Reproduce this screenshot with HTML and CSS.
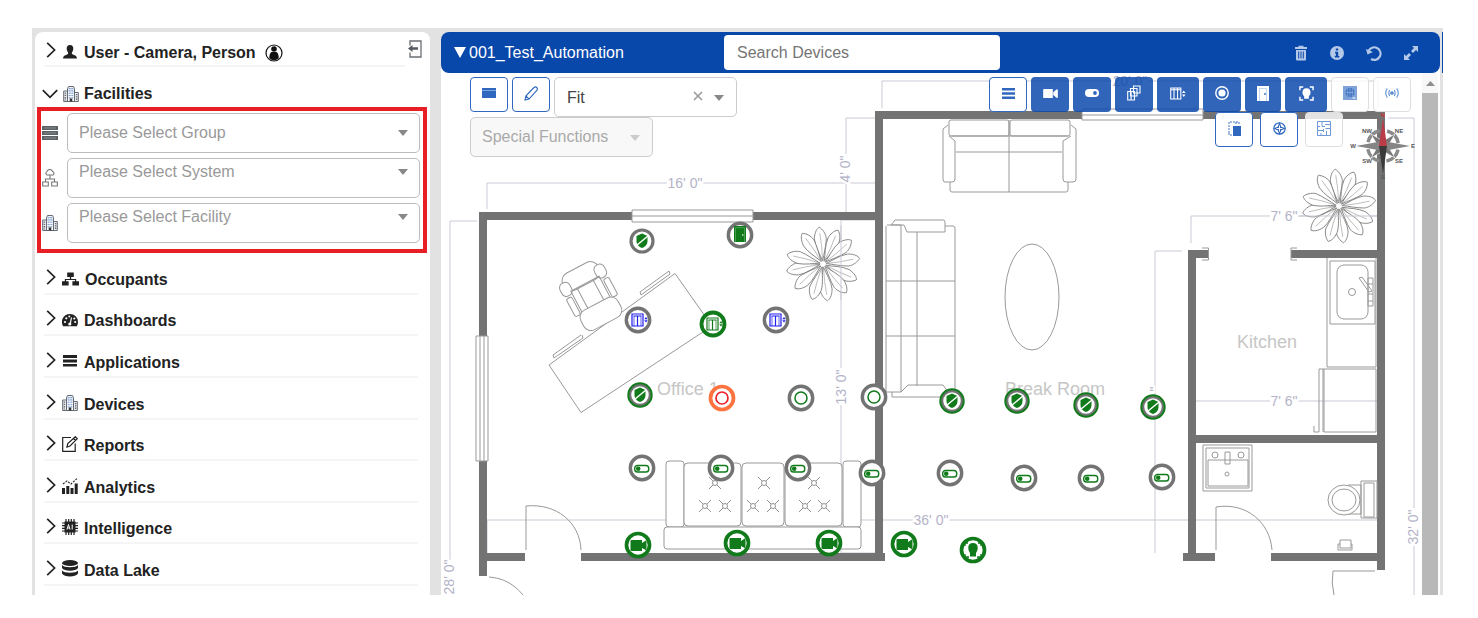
FILE: index.html
```
<!DOCTYPE html>
<html lang="en">
<head>
<meta charset="utf-8">
<title>Facility Devices</title>
<link rel="stylesheet" href="styles.css">
</head>
<body>
<svg class="sprite" aria-hidden="true">
  <symbol id="chev" viewBox="0 0 10 18"><path d="M1.2 1.8 8.6 9 1.2 16.2" fill="none" stroke="currentColor" stroke-width="1.7"/></symbol>
  <symbol id="chev-down" viewBox="0 0 16 10"><path d="M.8 1.2 8 8.4 15.2 1.2" fill="none" stroke="currentColor" stroke-width="1.7"/></symbol>
  <symbol id="building" viewBox="0 0 16 16"><path d="M4.5 15.5V2.5l1-2h5l1 2v13M4.5 5H.7v10.5h14.6V6.5h-3.8" fill="#eef1f6" stroke="#555b66" stroke-width=".9"/><path d="M6.2 2v11M8 2v11M9.8 2v11" stroke="#5f86c4" stroke-width="1" stroke-dasharray="1.3 1"/><path d="M2.4 6.5v8M13.6 8v6.500" stroke="#666" stroke-width="1.5" stroke-dasharray="1.300 1"/><path d="M6.700 12.500h2.600v3H6.700z" fill="#333"/></symbol>
  <symbol id="org" viewBox="0 0 18 14"><path d="M5.500 0h7v5h-7zM0 9.500h7V14H0zM11 9.500h7V14h-7zM8.300 5h1.400v2H15v3h-1.300V8H4.300v2H3V7h5.300z" fill="currentColor"/></symbol>
  <symbol id="cam" viewBox="0 0 16 12"><path d="M1 1h9.500v10H1a1 1 0 0 1-1-1V2a1 1 0 0 1 1-1zM11 4.500 14.500 1.500H16v9h-1.500L11 7.500z" fill="currentColor"/></symbol>
  <symbol id="lift" viewBox="0 0 18 14"><path d="M.800.800h11.400v12.400H.800zM4.500 1v12M8.500 1v12M1 2.800h11" fill="none" stroke="currentColor" stroke-width="1.200"/><path d="m15.500 3.500 2 3h-4zM13.500 8h4l-2 3z" fill="currentColor"/></symbol>
  <symbol id="face" viewBox="0 0 16 16"><path d="M8 2.500c3.200 0 4.300 2.200 4.300 4.500 0 1.800-.8 3-1.800 4v2.500h-5V11c-1-1-1.800-2.200-1.800-4C3.700 4.700 4.800 2.500 8 2.500z" fill="currentColor"/><path d="M1 4.500V1h3.500M11.500 1H15v3.500M15 11.500V15h-3.500M4.500 15H1v-3.500" fill="none" stroke="currentColor" stroke-width="1.500"/></symbol>

  <symbol id="pin-shield-grey" viewBox="-14 -14 28 28"><circle r="11" fill="#fff" stroke="#737373" stroke-width="3.200"/><use href="#shield"/></symbol>
  <symbol id="pin-shield" viewBox="-14 -14 28 28"><circle r="10" fill="#fff" stroke="#737373" stroke-width="2.500"/><circle r="11.700" fill="none" stroke="#117a1b" stroke-width="2"/><use href="#shield"/></symbol>
  <g id="shield"><path d="M0-7.500 5.500-5V0C5.500 3.500 3 6 0 7-3 6-5.500 3.500-5.500 0v-5z" fill="#117a1b"/><path d="M-5.500 4.500 6-5" stroke="#fff" stroke-width="1.500"/></g>
  <symbol id="pin-door" viewBox="-14 -14 28 28"><circle r="11.700" fill="#fff" stroke="#737373" stroke-width="3.400"/><path d="M-6-9H6V7h-12z" fill="#117a1b"/><path d="M-4.500 7V-7.300h9V7" fill="none" stroke="#5fae66" stroke-width=".7"/><circle cx="2.800" cy="0" r=".8" fill="#fff"/></symbol>
  <symbol id="pin-lift" viewBox="-14 -14 28 28"><circle r="11.700" fill="#fff" stroke="#737373" stroke-width="3.400"/><svg x="-7" y="-7" width="18" height="14" color="#1f1fee"><use href="#lift-pin"/></svg></symbol>
  <symbol id="pin-lift-on" viewBox="-14 -14 28 28"><circle r="11.500" fill="#fff" stroke="#117a1b" stroke-width="3.800"/><svg x="-7" y="-7" width="18" height="14" color="#117a1b"><use href="#lift-pin"/></svg></symbol>
  <g id="lift-pin"><path d="M1 1h11v12H1zM2.500 3h8M6.500 3v10" fill="none" stroke="currentColor" stroke-width="1.200"/><path d="M3 3v10M10 3v10" stroke="currentColor" stroke-width=".7"/><path d="m15 4 1.700 2.300h-3.400zM13.300 7.300h3.400L15 9.600z" fill="currentColor"/></g>
  <symbol id="pin-alarm" viewBox="-14 -14 28 28"><circle r="11.500" fill="#fff" stroke="#ff7340" stroke-width="3.700"/><circle r="6" fill="none" stroke="#f0202c" stroke-width="1.700"/></symbol>
  <symbol id="pin-ring" viewBox="-14 -14 28 28"><circle r="11.700" fill="#fff" stroke="#737373" stroke-width="3.400"/><circle r="6" fill="none" stroke="#117a1b" stroke-width="1.500"/></symbol>
  <symbol id="pin-toggle" viewBox="-14 -14 28 28"><circle r="11.700" fill="#fff" stroke="#737373" stroke-width="3.400"/><rect x="-7.300" y="-2.500" width="14" height="6.500" rx="2.800" fill="#fff" stroke="#117a1b" stroke-width="1.400"/><circle cx="-3.800" cy=".8" r="2.300" fill="#117a1b"/></symbol>
  <symbol id="pin-cam" viewBox="-14 -14 28 28"><circle r="11.500" fill="#fff" stroke="#117a1b" stroke-width="3.700"/><path d="M-6.500-5H4v3l4.500-3V5.500L4 3v3h-10.500a1 1 0 0 1-1-1v-9a1 1 0 0 1 1-1z" fill="#117a1b"/></symbol>
  <symbol id="pin-face" viewBox="-14 -14 28 28"><circle r="11.500" fill="#fff" stroke="#117a1b" stroke-width="3.700"/><path d="M0-7C3-7 4.700-5.500 4.700-2.500 4.700 0 4 1.500 3 3V6.500H-3V3C-4 1.500-4.700 0-4.700-2.500-4.700-5.500-3-7 0-7z" fill="#117a1b"/><path d="M-8-4v-3h3M8-4v-3H5M-8 4v3h4M8 4v3H4" fill="none" stroke="#117a1b" stroke-width="1.300"/></symbol>

  <g id="leaf"><path d="M0-3C-2-10-6-18-6-26-5-33-2-36 0-37 3-35 6-30 6-25 5-18 2-10 0-3z" fill="#fff" stroke="#777" stroke-width=".8"/><path d="M0-3Q1-18 0-31" fill="none" stroke="#999" stroke-width=".6"/></g>
  <g id="plant">
    <use href="#leaf" transform="rotate(-6)"/><use href="#leaf" transform="rotate(24)"/><use href="#leaf" transform="rotate(50)"/><use href="#leaf" transform="rotate(81)"/><use href="#leaf" transform="rotate(115)"/><use href="#leaf" transform="rotate(141)"/><use href="#leaf" transform="rotate(173)"/><use href="#leaf" transform="rotate(197)"/><use href="#leaf" transform="rotate(229)"/><use href="#leaf" transform="rotate(259)"/><use href="#leaf" transform="rotate(285)"/><use href="#leaf" transform="rotate(326)"/>
  </g>
  <g id="tuft" fill="none" stroke="#777" stroke-width=".8"><circle r="2.500"/><path d="M-2-2-6-6M2-2 6-6M-2 2-6 6M2 2 6 6"/></g>
</svg>

<div class="app">
  <aside class="sidebar">
    <div class="user-row">
      <button class="nav-item" type="button">
        <svg width="10" height="18"><use href="#chev"/></svg>
        <svg width="16" height="14" viewBox="0 0 16 14"><path d="M8 0c2.500 0 3.500 1.800 3.300 4C11.100 6 10.200 7 9.800 7.800c0 1.400.4 1.500 2.200 2.100 2 .6 2.800 1.300 3 3.600H1c.2-2.300 1-3 3-3.600 1.800-.6 2.200-.7 2.200-2.100C5.800 7 4.900 6 4.700 4 4.500 1.800 5.500 0 8 0z" fill="currentColor"/></svg>
        <span>User - Camera, Person</span>
        <svg class="badge" width="18" height="18" viewBox="0 0 18 18"><circle cx="9" cy="9" r="8" fill="#fff" stroke="#111" stroke-width="1.200"/><circle cx="9" cy="5" r="2.800" fill="#111"/><path d="M6.500 8h5c1.800 1 2.300 4 2.200 6.300-2.700 2.500-6.700 2.500-9.400 0C4.200 12 4.700 9 6.500 8z" fill="#111"/></svg>
      </button>
      <button class="collapse" type="button" aria-label="Collapse sidebar"><svg width="14" height="18" viewBox="0 0 14 18"><path d="M2 5.500V1h11v16H2v-4.500" fill="none" stroke="#6a6f73" stroke-width="1.300"/><path d="M0 8.500 4.500 5v2.200H10v2.600H4.500V12z" fill="#555b60"/></svg></button>
    </div>
    <button class="nav-item facilities" type="button" aria-expanded="true">
      <svg width="16" height="10"><use href="#chev-down"/></svg>
      <svg width="16" height="16"><use href="#building"/></svg>
      <span>Facilities</span>
    </button>
    <div class="filters">
      <label for="group" aria-label="Group"><svg width="16" height="14" viewBox="0 0 16 14"><path d="M0 0h16v4H0zM0 5h16v4H0zM0 10h16v4H0z" fill="#5d6266"/><path d="M2 2h12M2 7h12M2 12h12" stroke="#92979a" stroke-width=".8"/></svg></label>
      <div class="select"><select id="group"><option>Please Select Group</option></select></div>
      <label for="system" aria-label="System"><svg width="16" height="18" viewBox="0 0 16 18"><path d="M5 6a2 2 0 0 1 0-3.600 3 3 0 0 1 5.600 0A2 2 0 0 1 11 6zM8 6v4M3.500 13v-3h9v3M.700 13h5.600v4H.700zM9.700 13h5.600v4H9.700z" fill="none" stroke="#777" stroke-width="1.100"/></svg></label>
      <div class="select raised"><select id="system"><option>Please Select System</option></select></div>
      <label for="facility" aria-label="Facility"><svg width="16" height="16"><use href="#building"/></svg></label>
      <div class="select raised"><select id="facility"><option>Please Select Facility</option></select></div>
    </div>
    <nav class="nav">
      <button class="nav-item" type="button"><svg width="10" height="18"><use href="#chev"/></svg><svg width="17" height="14"><use href="#org"/></svg><span>Occupants</span></button>
      <button class="nav-item" type="button"><svg width="10" height="18"><use href="#chev"/></svg><svg width="16" height="14" viewBox="0 0 16 14"><path d="M8 1a8 8 0 0 1 8 8c0 1.600-.4 3-1.100 4.200H1.100A8 8 0 0 1 8 1z" fill="currentColor"/><path d="M8.200 11 9.500 4.500" stroke="#fff" stroke-width="1.200"/><g fill="#fff"><circle cx="7.800" cy="11" r="1.600"/><circle cx="3" cy="9" r="1.100"/><circle cx="4.300" cy="5.300" r="1.100"/><circle cx="7.300" cy="3.500" r="1"/><circle cx="12.300" cy="5.500" r="1.100"/><circle cx="13.200" cy="9" r="1.100"/></g></svg><span>Dashboards</span></button>
      <button class="nav-item" type="button"><svg width="10" height="18"><use href="#chev"/></svg><svg width="16" height="16" viewBox="0 0 16 16"><path d="M1 2h14v3H1zM1 6.500h14v3H1zM1 11h14v2.500H1z" fill="currentColor"/></svg><span>Applications</span></button>
      <button class="nav-item" type="button"><svg width="10" height="18"><use href="#chev"/></svg><svg width="16" height="16"><use href="#building"/></svg><span>Devices</span></button>
      <button class="nav-item" type="button"><svg width="10" height="18"><use href="#chev"/></svg><svg width="16" height="16" viewBox="0 0 16 16" fill="none" stroke="currentColor" stroke-width="1.200"><path d="M9 1.500H.7v13.800h12.500V7.500M5 11l.8-3.500 7.500-6.800 2 2L8 10zM11.500 2.500l2 2"/></svg><span>Reports</span></button>
      <button class="nav-item" type="button"><svg width="10" height="18"><use href="#chev"/></svg><svg width="16" height="16" viewBox="0 0 16 16"><path d="M0 10h3v6H0zM4.300 8h3v8h-3zM8.500 10h3v6h-3zM12.700 5.500h3V16h-3z" fill="currentColor"/><path d="m1 6 4-3 4 3 6-5.500" fill="none" stroke="currentColor" stroke-width="1.100" stroke-dasharray="2 1.200"/></svg><span>Analytics</span></button>
      <button class="nav-item" type="button"><svg width="10" height="18"><use href="#chev"/></svg><svg width="16" height="16" viewBox="0 0 16 16"><path d="M2.500 2.500h11v11h-11z" fill="currentColor"/><path d="M4 0v16M6.700 0v16M9.300 0v16M12 0v16M0 4h16M0 6.700h16M0 9.300h16M0 12h16" stroke="currentColor" stroke-width="1.200"/><path d="m5 10.500 1.500-5L8 10.500M5.500 9h2M10.200 5.500v5" fill="none" stroke="#fff" stroke-width="1"/></svg><span>Intelligence</span></button>
      <button class="nav-item" type="button"><svg width="10" height="18"><use href="#chev"/></svg><svg width="16" height="17" viewBox="0 0 16 17"><ellipse cx="8" cy="3" rx="8" ry="3" fill="currentColor"/><path d="M0 5c2 3 14 3 16 0v3c-2 3.500-14 3.500-16 0zM0 10.500c2 3 14 3 16 0v3c-2 4-14 4-16 0z" fill="currentColor"/></svg><span>Data Lake</span></button>
    </nav>
  </aside>

  <main class="main">
    <header class="bar">
      <button class="title" type="button"><svg width="12" height="11" viewBox="0 0 12 11"><path d="M0 0h12L6 11z" fill="#fff"/></svg><span>001_Test_Automation</span></button>
      <input class="search" type="text" placeholder="Search Devices" aria-label="Search Devices">
      <div class="actions">
        <button type="button" aria-label="Delete"><svg width="14" height="16" viewBox="0 0 14 16"><path d="M4.500 2V.700h5V2H13v2H1V2zM2 5h10v9.500a1 1 0 0 1-1 1H3a1 1 0 0 1-1-1z" fill="currentColor"/><path d="M4.700 6.500v7M7 6.500v7M9.300 6.500v7" stroke="#0848ab" stroke-width="1"/></svg></button>
        <button type="button" aria-label="Information"><svg width="14" height="14" viewBox="0 0 14 14"><circle cx="7" cy="7" r="7" fill="currentColor"/><path d="M5.800 2.500h2.400v2H5.800zM5 5.800h3.200V10H9.300v1.500H4.800V10h1V7.200H5z" fill="#0848ab"/></svg></button>
        <button type="button" aria-label="Reset"><svg width="16" height="16" viewBox="0 0 16 16"><path d="M2.500 6A6.300 6.300 0 1 1 5 14" fill="none" stroke="currentColor" stroke-width="2.100"/><path d="M0 4l1.500 5.500L7 7z" fill="currentColor"/></svg></button>
        <button type="button" aria-label="Expand"><svg width="14" height="14" viewBox="0 0 14 14"><path d="M8 0h6v6l-2-2-3 3-2-2 3-3zM6 14H0V8l2 2 3-3 2 2-3 3z" fill="currentColor"/></svg></button>
      </div>
    </header>
    <div class="body">
      <div class="canvas">
        <svg class="plan" width="980" height="522" viewBox="442 73 980 522">
          <g class="dim">
            <path d="M487 209V183H667M703 183H882M846 118V154M846 184V212M846 118H875M841 220V368M841 405V553M841 220H882M841 553H875M450 560V221H477M882 108V81H1112M1147 81H1378V108M487 553V520H913M949 520H1377M1155 553V251H1182M1191 243V216H1270M1298 216H1378M1191 401H1270M1298 401H1378M1388 118H1414V508M1414 545V595M1378 220V553"/>
          </g>
          <g class="wall">
            <path d="M479 212H632V220H487V336H479zM753 212H875V111H1082V119H883V553H885V561H581V553H875V220H753zM479 461H487V553H525V561H487V576H479zM1203 111H1385V570H1377V561H1271V553H1377V443H1196V553H1215V561H1183V553H1188V250H1208V258H1196V435H1377V258H1291V250H1377V119H1203z"/>
          </g>
          <g class="line">
            <path d="M632 210H753V222H632zM632 216H753M1082 109H1203V120H1082zM1082 115H1203M476 336H488V461H476zM480 336V461M484 336V461"/>
            <path d="M1202 248H1208.500V260H1202M1297 248H1291V260H1297"/>
            <path d="M526 550V506C556 503 580 522 581 550M489 577C503 578 514 584 523 595M1216 550V507C1246 502 1270 522 1272 550M1375 571H1333Q1331 583 1334 595"/>
            <path d="M549 365 675 273.500 712 326 581 412.500zM554 358 583 338 582 335M554 358 553 355 581 335M641 295 670 274 669 271 640 292z"/>
          </g>
          <g class="line" transform="translate(592 297) rotate(-28)">
            <rect x="-20" y="-33" width="40" height="19" rx="9"/><rect x="-25" y="-26" width="11" height="14" rx="5"/><rect x="14" y="-26" width="11" height="14" rx="5"/>
            <path d="M-16-15H16V9H-16zM-9-15V9M9-15V9"/><rect x="-24" y="-10" width="6" height="20" rx="2"/><rect x="18" y="-10" width="6" height="20" rx="2"/><rect x="-21" y="8" width="42" height="22" rx="8"/>
          </g>
          <g class="line">
            <rect x="949" y="120" width="60" height="16" rx="2"/><rect x="1010" y="120" width="60" height="16" rx="2"/>
            <path d="M1009 120V192M956 152H1062M950 182V190Q950 192 952 192H1066Q1068 192 1068 190V182M949 136 955 141V179Q955 182 952 182H945Q943 182 943 179V129L948 125M1071 136 1063 141V179Q1063 182 1066 182H1073Q1076 182 1076 179V129L1071 125M951 136H1068"/>
            <path d="M891 225 895 220H943Q945 220 945 222V232H907L904 225zM887 225H901V392H886V226M945 226H953Q955 226 955 228V392H945M917 232V386M886 281H955M886 336H955M901 392 908 385H943L948 392M892 392V397H940"/>
            <ellipse cx="1032" cy="297" rx="27" ry="53"/>
          </g>
          <g class="line">
            <rect x="666" y="461" width="18" height="66" rx="3"/><rect x="684" y="463" width="57" height="63" rx="4"/><rect x="742" y="463" width="42" height="63" rx="4"/><rect x="785" y="463" width="57" height="63" rx="4"/><rect x="843" y="461" width="18" height="66" rx="3"/><rect x="664" y="527" width="197" height="22" rx="3"/>
          </g>
          <use href="#tuft" x="715" y="483"/><use href="#tuft" x="705" y="506"/><use href="#tuft" x="725" y="506"/>
          <use href="#tuft" x="764" y="483"/><use href="#tuft" x="753" y="506"/><use href="#tuft" x="773" y="506"/>
          <use href="#tuft" x="814" y="483"/><use href="#tuft" x="805" y="506"/><use href="#tuft" x="824" y="506"/>
          <g class="line">
            <path d="M1327 258V367H1376V258M1330 261H1375V324H1330zM1319 369H1376V432H1324V369M1319 369V432M1314 426V432H1319M1323 369V432"/>
            <rect x="1337" y="265" width="31" height="54" rx="7"/><circle cx="1352" cy="292" r="3.500"/><path d="M1368 278H1373V306H1368zM1368 284H1373M1368 294H1373M1368 301H1373"/><path d="M1359 278 1362 277 1372 291 1369 292z"/>
            <path d="M1203 445H1252V491H1203zM1206 448H1249V488H1206zM1208 460H1248V486H1208zM1225 452H1230V464H1225z"/><circle cx="1215" cy="455" r="3"/><circle cx="1241" cy="455" r="3"/><circle cx="1227" cy="474" r="2"/>
            <path d="M1348 485H1361V514H1348"/><ellipse cx="1344" cy="500" rx="16" ry="15"/><ellipse cx="1344" cy="500" rx="12" ry="11"/><path d="M1361 481H1377V518H1361zM1364 483H1374V517H1364z"/>
            <path d="M1340 540H1351V548H1340zM1340 544H1338V550H1352V544H1351"/>
          </g>
          <use href="#plant" x="823" y="264"/><use href="#plant" x="1339" y="206"/>
          <g class="dim over"><path d="M841 226V300M1298 216H1377"/></g>
          <g class="dim-text">
            <text x="685" y="188">16' 0"</text><text x="1130" y="86">20' 0"</text><text x="931" y="525">36' 0"</text><text x="1284" y="221">7' 6"</text><text x="1284" y="406">7' 6"</text>
            <text transform="translate(850 169) rotate(-90)">4' 0"</text><text transform="translate(846 387) rotate(-90)">13' 0"</text><text transform="translate(454 577) rotate(-90)">28' 0"</text><text transform="translate(1418 527) rotate(-90)">32' 0"</text><text transform="translate(1160 389) rotate(-90)">"</text>
          </g>
          <g class="room"><text x="657" y="395">Office 1</text><text x="1005" y="395">Break Room</text><text x="1237" y="348">Kitchen</text></g>
        </svg>

        <div class="tools left">
          <div class="tool-row">
            <button class="tool outline" type="button" aria-label="Panel"><svg width="14" height="10" viewBox="0 0 14 10"><path d="M0 0h14v2H0zM0 3h14v7H0z" fill="currentColor"/><path d="M0 2.500h14" stroke="#7ba3dc"/></svg></button>
            <button class="tool outline" type="button" aria-label="Edit"><svg width="14" height="15" viewBox="0 0 14 15" fill="none" stroke="currentColor" stroke-width="1.100"><path d="M1 14l.8-4L10 1.500Q11.500.300 12.700 1.500T13 4.200L5 13zM1.800 10 5 13"/></svg></button>
            <div class="select fit"><select aria-label="Zoom"><option>Fit</option></select><button class="clear" type="button" aria-label="Clear"><svg width="10" height="10" viewBox="0 0 10 10"><path d="m1 1 8 8M9 1 1 9" stroke="#999" stroke-width="1.600"/></svg></button></div>
          </div>
          <div class="select special"><select aria-label="Special Functions" disabled><option>Special Functions</option></select></div>
        </div>

        <div class="tools right">
          <div class="tool-row">
            <button class="tool outline" type="button" aria-label="List"><svg width="13" height="11" viewBox="0 0 13 11"><path d="M0 0h13v2.500H0zM0 4.200h13v2.600H0zM0 8.500h13V11H0z" fill="currentColor"/></svg></button>
            <button class="tool solid" type="button" aria-label="Cameras"><svg width="15" height="11"><use href="#cam"/></svg></button>
            <button class="tool solid" type="button" aria-label="Switches"><svg width="14" height="8" viewBox="0 0 14 8"><rect width="14" height="8" rx="4" fill="#fff"/><circle cx="10" cy="4" r="1.900" fill="#2f68be"/></svg></button>
            <button class="tool solid" type="button" aria-label="Elevator groups"><svg width="14" height="16" viewBox="0 0 14 16" fill="#2f68be" stroke="#fff" stroke-width="1.100"><path d="M6.500 1H13v7H6.500zM3.500 3.500H10V11H3.500zM.700 6.500H7.500V15H.700zM4.100 6.500V15"/></svg></button>
            <button class="tool solid wide" type="button" aria-label="Elevators"><svg width="16" height="13"><use href="#lift"/></svg></button>
            <button class="tool solid" type="button" aria-label="Sensors"><svg width="14" height="14" viewBox="0 0 14 14"><circle cx="7" cy="7" r="6.200" fill="none" stroke="#fff" stroke-width="1.400"/><circle cx="7" cy="7" r="3.600" fill="#fff"/></svg></button>
            <button class="tool solid slim" type="button" aria-label="Doors"><svg width="12" height="15" viewBox="0 0 12 15"><path d="M0 0h12v15H0z" fill="#fff"/><path d="M2.500 15V2.500h7V15" fill="none" stroke="#a9c3e8" stroke-width=".7"/><circle cx="8" cy="8" r=".9" fill="#2f68be"/></svg></button>
            <button class="tool solid wide" type="button" aria-label="Persons"><svg width="15" height="15"><use href="#face"/></svg></button>
            <button class="tool faint" type="button" aria-label="Globe"><svg width="14" height="14" viewBox="0 0 14 14"><path d="M0 0h14v14H0z" fill="#7fa3d8"/><circle cx="7" cy="6.500" r="4.500" fill="#3d70c0"/><path d="M7 2v9M4.700 3v7M9.300 3v7M2.500 6.500h9" stroke="#9dbae4" stroke-width=".6"/><path d="M9.500 12h3" stroke="#fff"/></svg></button>
            <button class="tool faint" type="button" aria-label="Signal"><svg width="14" height="10" viewBox="0 0 14 10" fill="none" stroke="#5f8fd0" stroke-width="1.100"><circle cx="7" cy="5" r="1.300" fill="#5f8fd0"/><path d="M4.700 2Q3 5 4.700 8M9.300 2Q11 5 9.300 8M2.300.500Q-.800 5 2.300 9.500M11.700.500Q14.800 5 11.700 9.500"/></svg></button>
          </div>
          <div class="tool-row second">
            <button class="tool outline" type="button" aria-label="Rotate"><svg width="13" height="15" viewBox="0 0 13 15"><path d="M5 5h8v10H5z" fill="currentColor"/><path d="M1 12V1h7v3M8 1h3v2M1 12v2h3" fill="none" stroke="currentColor" stroke-width=".9" stroke-dasharray="2 1"/></svg></button>
            <button class="tool outline" type="button" aria-label="Compass"><svg width="13" height="13" viewBox="0 0 13 13"><circle cx="6.500" cy="6.500" r="5.700" fill="none" stroke="currentColor" stroke-width="1.200"/><path d="M6.500 0 8.300 4.700 13 6.500 8.300 8.300 6.500 13 4.700 8.300 0 6.500l4.700-1.800z" fill="currentColor"/><path d="M6.500 3.500v6M3.500 6.500h6" stroke="#fff"/></svg></button>
            <button class="tool faint" type="button" aria-label="Floor plan"><svg width="14" height="15" viewBox="0 0 14 15" fill="none" stroke="#6e99d6" stroke-width="1"><path d="M.500.500h13v14H.500zM.500 5.500H3M5 .500v5M5 5.500h3M8 3.500h5.500M.500 9.500h6M8.500 7.500h5M6.500 8v3M4 12v2.500M9.500 10v4.500"/></svg></button>
          </div>
        </div>

        <svg class="compass" width="68" height="72" viewBox="-34 -38 68 72">
          <circle r="15.500" fill="none" stroke="#8a8a8a" stroke-width="3.500" stroke-dasharray="17 7.350" stroke-dashoffset="-3.700"/>
          <path d="M-12-12 0-5 12-12 5 0 12 12 0 5-12 12-5 0z" fill="#777" stroke="#fff" stroke-width=".6"/>
          <path d="M-27 0 0-5 27 0 0 5z" fill="#858585"/><path d="M-4 0 0-28 4 0z" fill="#b93c48"/><path d="M-4 0 0 28 4 0z" fill="#3a3a3a"/>
          <g class="compass-text"><text x="0" y="-29" fill="#c33">N</text><text x="0" y="33">S</text><text x="-30" y="2">W</text><text x="30" y="2">E</text><text x="-16" y="-13">NW</text><text x="16" y="-13">NE</text><text x="-16" y="17">SW</text><text x="16" y="17">SE</text></g>
        </svg>

        <button class="pin" type="button" aria-label="Shield 1" style="left:200px;top:168px"><svg><use href="#pin-shield-grey"/></svg></button>
        <button class="pin" type="button" aria-label="Door 1" style="left:298px;top:162px"><svg><use href="#pin-door"/></svg></button>
        <button class="pin" type="button" aria-label="Elevator 1" style="left:196px;top:247px"><svg><use href="#pin-lift"/></svg></button>
        <button class="pin" type="button" aria-label="Elevator 2" style="left:271px;top:251px"><svg><use href="#pin-lift-on"/></svg></button>
        <button class="pin" type="button" aria-label="Elevator 3" style="left:334px;top:247px"><svg><use href="#pin-lift"/></svg></button>
        <button class="pin" type="button" aria-label="Shield 2" style="left:198px;top:322px"><svg><use href="#pin-shield"/></svg></button>
        <button class="pin" type="button" aria-label="Sensor 1" style="left:280px;top:325px"><svg><use href="#pin-alarm"/></svg></button>
        <button class="pin" type="button" aria-label="Sensor 2" style="left:359px;top:325px"><svg><use href="#pin-ring"/></svg></button>
        <button class="pin" type="button" aria-label="Sensor 3" style="left:432px;top:324px"><svg><use href="#pin-ring"/></svg></button>
        <button class="pin" type="button" aria-label="Shield 3" style="left:510px;top:328px"><svg><use href="#pin-shield"/></svg></button>
        <button class="pin" type="button" aria-label="Shield 4" style="left:575px;top:328px"><svg><use href="#pin-shield"/></svg></button>
        <button class="pin" type="button" aria-label="Shield 5" style="left:644px;top:332px"><svg><use href="#pin-shield"/></svg></button>
        <button class="pin" type="button" aria-label="Shield 6" style="left:711px;top:334px"><svg><use href="#pin-shield"/></svg></button>
        <button class="pin" type="button" aria-label="Switch 1" style="left:200px;top:395px"><svg><use href="#pin-toggle"/></svg></button>
        <button class="pin" type="button" aria-label="Switch 2" style="left:279px;top:395px"><svg><use href="#pin-toggle"/></svg></button>
        <button class="pin" type="button" aria-label="Switch 3" style="left:356px;top:395px"><svg><use href="#pin-toggle"/></svg></button>
        <button class="pin" type="button" aria-label="Switch 4" style="left:430px;top:400px"><svg><use href="#pin-toggle"/></svg></button>
        <button class="pin" type="button" aria-label="Switch 5" style="left:508px;top:400px"><svg><use href="#pin-toggle"/></svg></button>
        <button class="pin" type="button" aria-label="Switch 6" style="left:582px;top:405px"><svg><use href="#pin-toggle"/></svg></button>
        <button class="pin" type="button" aria-label="Switch 7" style="left:649px;top:405px"><svg><use href="#pin-toggle"/></svg></button>
        <button class="pin" type="button" aria-label="Switch 8" style="left:720px;top:404px"><svg><use href="#pin-toggle"/></svg></button>
        <button class="pin" type="button" aria-label="Camera 1" style="left:196px;top:472px"><svg><use href="#pin-cam"/></svg></button>
        <button class="pin" type="button" aria-label="Camera 2" style="left:295px;top:470px"><svg><use href="#pin-cam"/></svg></button>
        <button class="pin" type="button" aria-label="Camera 3" style="left:387px;top:470px"><svg><use href="#pin-cam"/></svg></button>
        <button class="pin" type="button" aria-label="Camera 4" style="left:462px;top:471px"><svg><use href="#pin-cam"/></svg></button>
        <button class="pin" type="button" aria-label="Person 1" style="left:531px;top:477px"><svg><use href="#pin-face"/></svg></button>
      </div>
      <div class="scrollbar"><svg width="9" height="5" viewBox="0 0 9 5"><path d="M0 5h9L4.500 0z" fill="#8f8f8f"/></svg><div class="thumb"></div></div>
    </div>
  </main>
  <div class="next-panel"></div>
</div>
</body>
</html>
```
FILE: styles.css
```
* { box-sizing: border-box; }
body {
  margin: 0;
  height: 100vh;
  padding: 28px 35px 23px 32px;
  background: #fff;
  color: #222;
  font: 16px/20px "Liberation Sans", Arial, sans-serif;
}
button, input, select { font: inherit; color: inherit; margin: 0; }
button { padding: 0; border: 0; background: none; }
svg { display: block; flex: none; }
.sprite { position: absolute; width: 0; height: 0; }

.app {
  display: flex;
  height: 100%;
  padding: 4px 0 0 3px;
  background: #e2e2e2;
  overflow: hidden;
}

/* Sidebar */
.sidebar {
  display: flex;
  flex-direction: column;
  flex: none;
  width: 395px;
  margin-right: 11px;
  background: #fff;
  border-radius: 8px 8px 0 0;
}
.user-row { display: flex; height: 35px; padding: 0 8px 0 9px; }
.user-row .nav-item { flex: 1; padding-bottom: 2px; }
.user-row .nav-item .badge { margin: 0 0 1px 3px; }
.collapse { align-self: flex-start; margin: 8px 0 0 3px; }
.nav-item {
  display: flex;
  align-items: flex-end;
  gap: 6px;
  width: 100%;
  padding: 0 0 3px 2px;
  border-bottom: 2px solid #f5f5f5;
  font-weight: bold;
  text-align: left;
}
.nav-item svg { align-self: flex-end; margin-bottom: 4px; }
.nav-item > svg:first-child { margin-bottom: 4px; }
.facilities {
  align-items: center;
  height: 40px;
  padding: 13px 0 0 7px;
  gap: 5px;
  border: 0;
}
.facilities svg, .facilities > svg:first-child { align-self: center; margin: 0; }
.filters {
  display: grid;
  grid-template-columns: 17px 1fr;
  align-items: center;
  gap: 5px 8px;
  margin: 0 3px 0 2px;
  padding: 2px 3px 6px 1px;
  border: 4px solid #e81e25;
}
.nav {
  display: flex;
  flex: 1;
  flex-direction: column;
  padding: 0 12px 9px 9px;
}
.nav .nav-item { flex: 1; }

/* Drop-downs */
.select { position: relative; }
.select select {
  display: block;
  width: 100%;
  height: 40px;
  padding: 0 32px 0 11px;
  appearance: none;
  border: 1px solid #bcbcbc;
  border-radius: 5px;
  background: #fff;
  color: #999;
}
.select::after {
  content: "";
  position: absolute;
  right: 12px;
  top: 17px;
  border: 5px solid transparent;
  border-top: 6px solid #888;
  border-bottom: 0;
}
.select.raised select { padding-bottom: 12px; }
.select.raised::after { top: 11px; }
.fit { width: 183px; }
.fit select { padding-top: 2px; padding-left: 12px; border-color: #ccc; color: #444; }
.clear { position: absolute; right: 34px; top: 14px; }
.special { width: 183px; }
.special select { border-color: #ccc; background: #f8f8f8; color: #aaa; opacity: 1; }
.special::after { border-top-color: #ccc; }
.tools .select::after { top: 18px; right: 13px; }

/* Main panel */
.main {
  display: flex;
  flex: 1;
  flex-direction: column;
  min-width: 0;
  background: #fff;
  border-radius: 8px 8px 0 0;
}
.bar {
  display: flex;
  align-items: center;
  height: 41px;
  padding: 0 22px 0 13px;
  background: #0848ab;
  border-radius: 8px;
  color: #fff;
}
.title { display: flex; align-items: center; gap: 3px; width: 270px; }
.search {
  width: 276px;
  height: 35px;
  padding: 0 13px;
  border: 0;
  border-radius: 4px;
  background: #fff;
  color: #333;
}
.search::placeholder { color: #757575; opacity: 1; }
.actions { display: flex; align-items: center; gap: 22px; margin-left: auto; color: #b4c8e8; }
.body { display: flex; flex: 1; min-height: 0; padding: 0 2px 0 1px; }
.canvas { position: relative; flex: 1; min-width: 0; overflow: hidden; }
.scrollbar {
  display: flex;
  flex-direction: column;
  align-items: center;
  gap: 7px;
  width: 16px;
  padding-top: 8px;
  background: #f8f8f8;
}
.thumb { flex: 1; width: 100%; background: #b8b8b8; }
.next-panel { width: 1px; height: 41px; margin-left: 2px; background: #0848ab; }

/* Floor plan */
.dim path { fill: none; stroke: #c9c9d6; }
.wall path { fill: #737373; }
.line { fill: #fff; stroke: #999; stroke-width: 1; }
.line path { fill: none; }
.dim-text { fill: #b3b3c8; font-size: 14px; text-anchor: middle; }
.dim-text text { stroke: #fff; stroke-width: 4px; paint-order: stroke; }
.room { fill: #c6c6c6; font-size: 18px; }
.compass { position: absolute; right: 5px; top: 35px; }
.compass-text { font-size: 6px; font-weight: bold; text-anchor: middle; fill: #555; }

/* Toolbars over the plan */
.tools { position: absolute; top: 4px; z-index: 1; }
.compass { z-index: 2; }
.tools.left { left: 28px; }
.tools.right { right: 11px; }
.tool-row { display: flex; gap: 4px; }
.tool-row.second { gap: 7px; padding-right: 68px; justify-content: flex-end; }
.tool {
  display: flex;
  justify-content: center;
  width: 38px;
  height: 35px;
  padding-bottom: 3px;
  align-items: center;
  border: 1px solid #2f68be;
  border-radius: 4px;
  background: #fff;
  color: #2f68be;
}
.tool.solid { background: rgba(8, 72, 171, 0.84); border-color: transparent; color: #fff; }
.tool.wide { width: 42px; }
.tool.slim { width: 36px; }
.tool.faint { background: rgba(255, 255, 255, 0.8); border-color: #dedede; }

/* Device pins */
.pin { position: absolute; width: 28px; height: 28px; margin: -14px 0 0 -14px; }
.pin svg { width: 28px; height: 28px; }
```
